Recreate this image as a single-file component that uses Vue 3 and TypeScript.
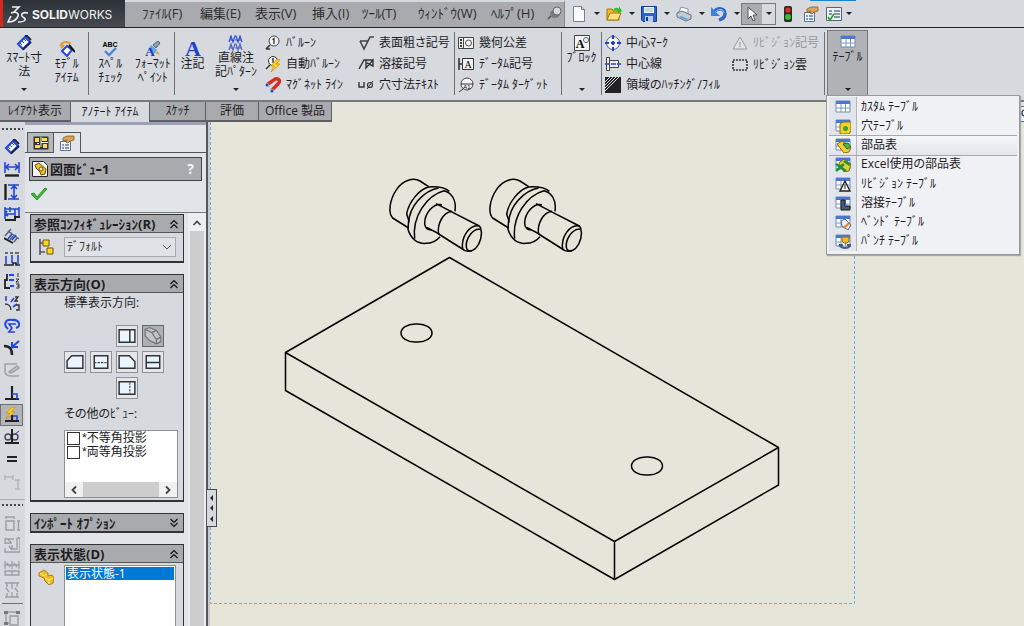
<script setup lang="ts">
import { ref } from 'vue'

interface Tool { icon: string; label: string; off?: boolean }

const menus: string[] = ['ﾌｧｲﾙ(F)', '編集(E)', '表示(V)', '挿入(I)', 'ﾂｰﾙ(T)', 'ｳｨﾝﾄﾞｳ(W)', 'ﾍﾙﾌﾟ(H)']
const quick: Tool[] = [
  { icon: 'new', label: '新規' },
  { icon: 'open', label: '開く' },
  { icon: 'save', label: '保存' },
  { icon: 'print', label: '印刷' },
  { icon: 'undo', label: '元に戻す' },
]
const balloons: Tool[] = [
  { icon: 'balloon', label: 'ﾊﾞﾙｰﾝ' },
  { icon: 'autoballoon', label: '自動ﾊﾞﾙｰﾝ' },
  { icon: 'magnet', label: 'ﾏｸﾞﾈｯﾄ ﾗｲﾝ' },
]
const symbols: Tool[] = [
  { icon: 'surface', label: '表面粗さ記号' },
  { icon: 'weld', label: '溶接記号' },
  { icon: 'holecall', label: '穴寸法ﾃｷｽﾄ' },
]
const datums: Tool[] = [
  { icon: 'gtol', label: '幾何公差' },
  { icon: 'datum', label: 'ﾃﾞｰﾀﾑ記号' },
  { icon: 'target', label: 'ﾃﾞｰﾀﾑ ﾀｰｹﾞｯﾄ' },
]
const centers: Tool[] = [
  { icon: 'cmark', label: '中心ﾏｰｸ' },
  { icon: 'cline', label: '中心線' },
  { icon: 'hatch', label: '領域のﾊｯﾁﾝｸﾞ/ﾌｨﾙ' },
]
const revisions: Tool[] = [
  { icon: 'revsym', label: 'ﾘﾋﾞｼﾞｮﾝ記号', off: true },
  { icon: 'cloud', label: 'ﾘﾋﾞｼﾞｮﾝ雲' },
]
const tableMenu: Tool[] = [
  { icon: 't-plain', label: 'ｶｽﾀﾑ ﾃｰﾌﾞﾙ' },
  { icon: 't-hole', label: '穴ﾃｰﾌﾞﾙ' },
  { icon: 't-bom', label: '部品表' },
  { icon: 't-excel', label: 'Excel使用の部品表' },
  { icon: 't-rev', label: 'ﾘﾋﾞｼﾞｮﾝ ﾃｰﾌﾞﾙ' },
  { icon: 't-weld', label: '溶接ﾃｰﾌﾞﾙ' },
  { icon: 't-bend', label: 'ﾍﾞﾝﾄﾞ ﾃｰﾌﾞﾙ' },
  { icon: 't-punch', label: 'ﾊﾟﾝﾁ ﾃｰﾌﾞﾙ' },
]
const tabs: string[] = ['ﾚｲｱｳﾄ表示', 'ｱﾉﾃｰﾄ ｱｲﾃﾑ', 'ｽｹｯﾁ', '評価', 'Office 製品']
const sideA: string[] = ['smart', 's-hdim', 's-vdim', 's-base', 's-ord', 's-hord', 's-vord', 's-chain', 's-path', 's-attach', 's-pencil', 's-perp', 's-auto', 's-view', 's-eq', 's-corner']
const sideB: string[] = ['s-g1', 's-g2', 's-g3', 's-g4']
const views: string[] = ['', '', 'v-top', 'v-iso', 'v-left', 'v-front', 'v-right', 'v-back', '', '', 'v-bottom', '']
const others = ref([
  { name: '*不等角投影', on: false },
  { name: '*両等角投影', on: false },
])
const hovered = ref<string>('t-bom')
const config = ref<string>('ﾃﾞﾌｫﾙﾄ')
</script>

<template>
  <svg class="sprite" aria-hidden="true">
    <symbol id="smart" viewBox="0 0 16 16"><path d="M2 9 9 2l5 5-7 7z" fill="#f4f8ff" stroke="#2344d8" stroke-width="2" /><path d="M7 14.500l8-7.500M9 1h2l4 4" fill="none" stroke="#1a2040" stroke-width="1.800" /><path d="M4 8l2 2M6 6l2 2M8 4l2 2" stroke="#2344d8" /></symbol>
    <symbol id="model" viewBox="0 0 16 16"><path d="M1 5C4 0 9 0 11 3M2 7l3-3" fill="none" stroke="#e79a2c" stroke-width="2" /><path d="M3 10l5-5 5 4-5 6z" fill="#fff" stroke="#2344d8" stroke-width="2" /><path d="M10 4l6 7" stroke="#111" stroke-width="2" /><circle cx="11" cy="2" r="1" fill="#e79a2c" /></symbol>
    <symbol id="spell" viewBox="0 0 16 16"><text x="8" y="6" text-anchor="middle" font-size="7" font-weight="700" font-family="Liberation Sans, sans-serif">ABC</text><path d="M3 10l4 4 7-7" fill="none" stroke="#4a86d8" stroke-width="2.4" /></symbol>
    <symbol id="format" viewBox="0 0 16 16"><path d="M8 4l5-4 2 2-4 5z" fill="#8aa" stroke="#557" /><path d="M6 4l6 5-3 4-6-4z" fill="#5da4e4" /><text x="5" y="15" text-anchor="middle" font-size="13" font-weight="700" fill="#1a35c8" font-family="Liberation Serif, serif">A</text><path d="M11 11l3 2" stroke="#e79a2c" stroke-width="2" /></symbol>
    <symbol id="note" viewBox="0 0 16 16"><text x="8" y="15" text-anchor="middle" font-size="22" font-weight="700" fill="#1f3fd0" font-family="Liberation Serif, serif">A</text></symbol>
    <symbol id="linear" viewBox="0 0 16 16"><g fill="none" stroke-width="1.2"><path d="M1 7l2-6 2 6 2-6h1l2 6 2-6 2 6M2 5h2M7 5h3M11 5h2" stroke="#2d49e0" /><path d="M1 15l2-6 2 6 2-6h1l2 6 2-6 2 6M2 13h2M7 13h3M11 13h2" stroke="#4d61c8" /></g></symbol>
    <symbol id="balloon" viewBox="0 0 16 16"><circle cx="9" cy="6" r="5" fill="#f7f7f7" stroke="#444" /><path d="M5 10l-4 4M1 14h4" stroke="#333" stroke-width="1.6" /><path d="M7.500 4.500L9 3.500V9" fill="none" stroke="#222" stroke-width="1.200" /></symbol>
    <symbol id="autoballoon" viewBox="0 0 16 16"><circle cx="8" cy="5" r="4.500" fill="#f7f7f7" stroke="#333" /><path d="M5 9l-4 4M7 3.500L8 3v4" stroke="#333" fill="none" stroke-width="1.400" /><path d="M12 3L6 10h3l-3 6 9-8h-4l4-4z" fill="#ffd21c" stroke="#c68a10" stroke-width=".7" /></symbol>
    <symbol id="magnet" viewBox="0 0 16 16"><path d="M3 7l7-5c4-1 6 2 3 5l-6 6" fill="none" stroke="#d92c20" stroke-width="3.400" /><path d="M1 6l4 4M5 12l4 2" stroke="#b8c0c8" stroke-width="2" /><circle cx="2" cy="8" r="1.500" fill="#2344d8" /><circle cx="7" cy="14" r="1.500" fill="#2344d8" /></symbol>
    <symbol id="surface" viewBox="0 0 16 16"><path d="M2 6h8M2 6l4 8 6-12h4" fill="none" stroke="#444" stroke-width="1.600" /></symbol>
    <symbol id="weld" viewBox="0 0 16 16"><path d="M1 13l5-9h9M8 4v8l7-8v6l-6-3" fill="none" stroke="#333" stroke-width="1.400" /></symbol>
    <symbol id="holecall" viewBox="0 0 16 16"><path d="M1 5v5h5V5" fill="none" stroke="#333" stroke-width="1.400" /><circle cx="12" cy="8" r="2.500" fill="none" stroke="#333" stroke-width="1.200" /><path d="M9 12l6-8" stroke="#333" /></symbol>
    <symbol id="gtol" viewBox="0 0 16 16"><path d="M.5 2.500h15v11H.5zM5.500 2.500v11" fill="#f3f3f3" stroke="#444" /><path d="M3 4v8" stroke="#333" stroke-width="2" stroke-dasharray="2 1" /><circle cx="10.500" cy="8" r="3" fill="none" stroke="#555" /></symbol>
    <symbol id="datum" viewBox="0 0 16 16"><path d="M4.500 2.500h11v11h-11z" fill="#f3f3f3" stroke="#333" /><path d="M1 2v12M1 8h3" stroke="#333" stroke-width="1.600" /><text x="10" y="12" text-anchor="middle" font-size="10" font-family="Liberation Serif, serif">A</text></symbol>
    <symbol id="target" viewBox="0 0 16 16"><circle cx="9" cy="7" r="6" fill="#f3f3f3" stroke="#444" /><path d="M3 7h12M5 12l-4 3" stroke="#333" /><text x="9" y="12" text-anchor="middle" font-size="6" font-family="Liberation Sans, sans-serif">A1</text></symbol>
    <symbol id="block" viewBox="0 0 16 16"><path d="M.5.5h15v15H.5z" fill="#f3f3f3" stroke="#444" /><text x="6" y="13" text-anchor="middle" font-size="12" font-weight="700" font-family="Liberation Serif, serif">A</text><circle cx="12" cy="5" r="2.500" fill="none" stroke="#666" /></symbol>
    <symbol id="cmark" viewBox="0 0 16 16"><circle cx="8" cy="8" r="6.500" fill="#f3f6fb" stroke="#55606e" /><path d="M8 0v4M8 6v4M8 12v4M0 8h4M6 8h4M12 8h4" stroke="#2140d8" stroke-width="2" /></symbol>
    <symbol id="cline" viewBox="0 0 16 16"><path d="M1.500 1.500h3v13h-3zM4.500 4.500h9v7h-9z" fill="#eee" stroke="#444" /><path d="M0 8h16" stroke="#2140d8" stroke-width="1.600" stroke-dasharray="5 1" /></symbol>
    <symbol id="hatch" viewBox="0 0 16 16"><path d="M0 0h16v16H0z" fill="#222" /><path d="M0 5l5-5M0 8l8-8M0 11L11 0M0 14L14 0" stroke="#ddd" /></symbol>
    <symbol id="revsym" viewBox="0 0 16 16"><path d="M8 2l7 12H1z" fill="#e2e3e5" stroke="#999" /><path d="M7 8l1-1v5" fill="none" stroke="#999" /></symbol>
    <symbol id="cloud" viewBox="0 0 16 16"><path d="M1 3h14v10H1z" fill="none" stroke="#333" stroke-width="1.600" stroke-dasharray="2 1" /></symbol>
    <symbol id="new" viewBox="0 0 16 16"><path d="M2.500.5h8l3 3v12h-11z" fill="#f8fbff" stroke="#6d8298" /><path d="M10.500.5v3h3" fill="#bfd0e0" stroke="#6d8298" /></symbol>
    <symbol id="open" viewBox="0 0 16 16"><path d="M1 3h5l1 2h6v9H1z" fill="#f3b928" stroke="#a87510" /><path d="M1 14l3-7h11l-3 7z" fill="#ffe27a" stroke="#a87510" /><path d="M7 5c1-4 4-4 6-2V0l3 5-4 3V5c-2-1-3-1-5 0z" fill="#2fbf2a" /></symbol>
    <symbol id="save" viewBox="0 0 16 16"><path d="M.5.5h15v15H2l-1.500-1.500z" fill="#2d63d0" stroke="#173a8c" /><path d="M3 1h10v6H3z" fill="#f3f8ff" /><path d="M4 10h8v6H4z" fill="#b8cdf0" /><path d="M5 11h2v4H5z" fill="#173a8c" /><path d="M4 3h8M4 5h8" stroke="#9bb" /></symbol>
    <symbol id="print" viewBox="0 0 16 16"><path d="M3 6l2-5 7 2 0 5z" fill="#fff" stroke="#8793a0" /><path d="M1 7l5-2 9 4v4l-5 2-9-4z" fill="#c3cad3" stroke="#66717e" /><path d="M3 11l7 3 2-1-7-3z" fill="#5aa0e8" /></symbol>
    <symbol id="undo" viewBox="0 0 16 16"><path d="M3 6c4-5 11-4 11 2 0 4-3 5-6 6" fill="none" stroke="#2b66c8" stroke-width="3.400" /><path d="M0 1v9h9z" fill="#3b82dc" /><path d="M4 6c4-4 9-3 9 1" fill="none" stroke="#8fc3f4" /></symbol>
    <symbol id="cursor" viewBox="0 0 16 16"><path d="M4 1v12l3-3 2 5 2-1-2-5h4z" fill="#fff" stroke="#555" /></symbol>
    <symbol id="traffic" viewBox="0 0 16 16"><rect x="4" y="0" width="8" height="16" rx="2" fill="#2b2b2b" /><circle cx="8" cy="4" r="2.600" fill="#e03020" /><circle cx="8" cy="11" r="3" fill="#34c030" /></symbol>
    <symbol id="props" viewBox="0 0 16 16"><path d="M1.500 6.500h10v9h-10z" fill="#f4f6f8" stroke="#68707c" /><path d="M3 10h2M6 10h4M3 13h2M6 13h4" stroke="#4c7cc0" stroke-width="1.400" /><path d="M4 3l4-2h7v4l-4 1-2 2-2-1 1-2-4 1z" fill="#d7a45c" stroke="#8a5a20" stroke-width=".8" /></symbol>
    <symbol id="options" viewBox="0 0 16 16"><path d="M.5 1.500h15v13H.5z" fill="#e9f1f8" stroke="#567" /><path d="M3 5h3M3 8h3M8 5h6M8 8h6M8 11h6" stroke="#678" stroke-width="1.300" /><path d="M2 11l2 3 4-6" fill="none" stroke="#24a024" stroke-width="1.600" /></symbol>
    <symbol id="pin" viewBox="0 0 16 16"><path d="M5 10l-4 4" stroke="#555" stroke-width="1.600" /><ellipse cx="8" cy="9" rx="5" ry="4" fill="#77797e" /><circle cx="10" cy="6" r="4" fill="#d5d8dc" stroke="#666" /></symbol>
    <symbol id="zoomfit" viewBox="0 0 16 16"><path d="M.5.5h15v15H.5z" fill="#e8f0fa" stroke="#4a6ea8" /><circle cx="5" cy="7" r="3" fill="#fff" stroke="#345" stroke-width="1.400" /></symbol>
    <symbol id="t-plain" viewBox="0 0 16 16"><path d="M1 2h14v11H1z" fill="#fff" stroke="#6f8cb8" /><path d="M1 2h14v3H1z" fill="#4a78d0" /><path d="M1 9h14M6 5v8M10.500 5v8" stroke="#7f98bc" /></symbol>
    <symbol id="t-hole" viewBox="0 0 16 16"><use href="#t-plain" /><path d="M5 6l3-2h8v9l-2 3H5z" fill="#f1d326" stroke="#8a7010" /><circle cx="10.500" cy="10.500" r="2.500" fill="#3da52d" /></symbol>
    <symbol id="t-bom" viewBox="0 0 16 16"><use href="#t-plain" /><path d="M2 7l5-3 9 6-2 5-5 1z" fill="#f4cd30" stroke="#946b10" /><path d="M8 7l5-1 3 4-4 2z" fill="#54b83e" stroke="#246b1c" /></symbol>
    <symbol id="t-excel" viewBox="0 0 16 16"><use href="#t-plain" /><path d="M4 7l5-4 7 5-2 7-5 1z" fill="#e6d03a" stroke="#7d6c10" /><path d="M1 8l10 7M1 15l8-7M9 5l6 4" stroke="#219236" stroke-width="2.600" /></symbol>
    <symbol id="t-rev" viewBox="0 0 16 16"><use href="#t-plain" /><path d="M10 5l5 10H5z" fill="#f4f4f4" stroke="#222" stroke-width="1.400" /><path d="M10 8v5" stroke="#222" /></symbol>
    <symbol id="t-weld" viewBox="0 0 16 16"><use href="#t-plain" /><path d="M6 5h4v6h5v4H6z" fill="#4c5868" stroke="#151b24" /><path d="M10 8l3 3h-3z" fill="#3f73d0" /></symbol>
    <symbol id="t-bend" viewBox="0 0 16 16"><use href="#t-plain" /><path d="M6 7l4-2 6 6-3 5-6-4z" fill="#eceff2" stroke="#596373" /><path d="M9 14l5-5" stroke="#e57a25" stroke-width="2" /></symbol>
    <symbol id="t-punch" viewBox="0 0 16 16"><use href="#t-plain" /><path d="M7 4h7v4l-2 2h-3L7 8z" fill="#f0b832" stroke="#98660e" /><path d="M4 12c3 4 9 4 12 0M4 12h4M12 12h4" fill="none" stroke="#435a80" stroke-width="1.800" /></symbol>
    <symbol id="s-hdim" viewBox="0 0 16 16"><path d="M1 1v11M15 1v11M2 6h12M5 3L2 6l3 3M11 3l3 3-3 3" fill="none" stroke="#2446dc" stroke-width="1.600" /><path d="M1 14.500h14" stroke="#222" stroke-width="2.400" /></symbol>
    <symbol id="s-vdim" viewBox="0 0 16 16"><path d="M4 1h11M4 15h11M10 2v12M7 5l3-3 3 3M7 11l3 3 3-3" fill="none" stroke="#2446dc" stroke-width="1.600" /><path d="M1.500 0v16" stroke="#222" stroke-width="2.400" /></symbol>
    <symbol id="s-base" viewBox="0 0 16 16"><path d="M1 1v12M15 1v9M1 3h14M1 8h10M6 1v5M11 3v8M3 5l-2 3 3 2" fill="none" stroke="#2446dc" stroke-width="1.600" /><path d="M1 14h10v-3h5" fill="none" stroke="#222" stroke-width="2" /></symbol>
    <symbol id="s-ord" viewBox="0 0 16 16"><path d="M1 8l6-7M4 3l11 8M6 12l3-4M10 14l3-4" fill="none" stroke="#555f78" stroke-width="1.400" /><path d="M4 11l4-5M8 12l4-5" stroke="#2446dc" stroke-width="1.600" /><path d="M0 10l9 5" stroke="#222" stroke-width="2" /></symbol>
    <symbol id="s-hord" viewBox="0 0 16 16"><path d="M1 2h3M6 2h3M11 2h4" stroke="#444" stroke-width="1.500" /><path d="M2 5v8M8 4v8M14 4v9" stroke="#2446dc" stroke-width="1.600" /><path d="M0 14h9v-2h3v2h4" fill="none" stroke="#222" stroke-width="1.600" /></symbol>
    <symbol id="s-vord" viewBox="0 0 16 16"><path d="M3 1v6H1v8h5" fill="none" stroke="#222" stroke-width="1.800" /><path d="M5 2h5M5 7h5M6 13h4" stroke="#2446dc" stroke-width="1.800" /><path d="M14 0v4M12 6h3l-3 3h3M12 11h3v4h-3M13 13h2" fill="none" stroke="#333" /></symbol>
    <symbol id="s-chain" viewBox="0 0 16 16"><path d="M2 1v5M7 7l3-4M9 12l4-3" stroke="#2446dc" stroke-width="1.600" /><path d="M1 9c3 0 6 2 6 6M11 2h3l-3 4h3M12 10h3v5h-3" fill="none" stroke="#333" stroke-width="1.400" /></symbol>
    <symbol id="s-path" viewBox="0 0 16 16"><path d="M4 11C-1 7 1 1 8 2c7-1 10 6 4 8" fill="none" stroke="#2446dc" stroke-width="2" /><path d="M12 6H5l3 4-3 4h6" fill="none" stroke="#2446dc" stroke-width="1.700" /></symbol>
    <symbol id="s-attach" viewBox="0 0 16 16"><path d="M0 6c6 0 8 3 8 9M7 7h3" fill="none" stroke="#222" stroke-width="2.600" /><path d="M15 1L8 7M8 2v5h6" fill="none" stroke="#2446dc" stroke-width="2" /></symbol>
    <symbol id="s-pencil" viewBox="0 0 16 16"><path d="M13 2H1v7c0 4 3 5 6 5h8M5 10l8-6 2 2-8 5z" fill="none" stroke="#a0a3a8" stroke-width="1.600" /></symbol>
    <symbol id="s-perp" viewBox="0 0 16 16"><path d="M8 1v12M1 14h14" stroke="#222" stroke-width="2.200" /><path d="M8 9h5v5" fill="none" stroke="#2446dc" stroke-width="1.600" /></symbol>
    <symbol id="s-auto" viewBox="0 0 16 16"><path d="M1 14h14M8 8v6" stroke="#222" stroke-width="2.200" /><path d="M9 9h4v4" fill="none" stroke="#2446dc" stroke-width="1.600" /><path d="M8 0L2 6h4l-4 6 9-7H7l4-5z" fill="#ffd21c" stroke="#c68a10" stroke-width=".7" /></symbol>
    <symbol id="s-view" viewBox="0 0 16 16"><circle cx="4" cy="8" r="3" fill="none" stroke="#446" stroke-width="1.400" /><circle cx="11" cy="8" r="3" fill="none" stroke="#446" stroke-width="1.400" /><path d="M8 0v14M1 14h14" stroke="#222" stroke-width="2" /><path d="M11 5l4-3" stroke="#446" /></symbol>
    <symbol id="s-eq" viewBox="0 0 16 16"><path d="M3 5h10M3 9h10" stroke="#222" stroke-width="2" /></symbol>
    <symbol id="s-corner" viewBox="0 0 16 16"><path d="M1 1v5M9 1v5M1 3h8M11 6h5M11 15h5M14 6v9" stroke="#b2b5ba" stroke-width="1.400" /></symbol>
    <symbol id="s-g1" viewBox="0 0 16 16"><path d="M2 6h8v9H2zM2 1v3M10 1v3M2 2h8M13 6h3M13 15h3M14.500 6v9" fill="none" stroke="#9a9da3" stroke-width="1.400" /></symbol>
    <symbol id="s-g2" viewBox="0 0 16 16"><path d="M1 2h9M1 6h7M1 1v6M13 1h3v14H1v-4M13 1v11H8V8M5 9l3 4M4 3l3 2" fill="none" stroke="#9a9da3" stroke-width="1.300" /></symbol>
    <symbol id="s-g3" viewBox="0 0 16 16"><path d="M1 1v8M8 1v8M15 1v8M1 5h14M1 11h14v4H1zM8 11v4M3 3l3 4M10 3l3 4" fill="none" stroke="#9a9da3" stroke-width="1.300" /></symbol>
    <symbol id="s-g4" viewBox="0 0 16 16"><path d="M1 1h14M1 15h14M3 1v4M8 1v6M13 1v4M3 11v4M8 10v5M13 11v4M2 6l3 4M11 6l3 4" fill="none" stroke="#9a9da3" stroke-width="1.300" /></symbol>
    <symbol id="s-group" viewBox="0 0 16 16"><path d="M2 2h12M2 2v11h4M6 6h8v9H6z" fill="none" stroke="#9a9da3" stroke-width="1.400" /><path d="M0 1h4v3H0zM12 1h4v3h-4zM0 12h4v3H0z" fill="#777" /></symbol>
    <symbol id="tree" viewBox="0 0 16 16"><path d="M.5 1.500h15v13H.5z" fill="#333" /><path d="M2 3h4v4H2zM9 3h5v3H9zM2 10h5v3H2zM10 9h4v4h-4z" fill="#ffd94c" /><path d="M8 7.500h7M4 8.500h2M8 2v10" stroke="#fff" /></symbol>
    <symbol id="drawview" viewBox="0 0 16 16"><path d="M.5.5h11l4 4v11H.5z" fill="#f4f8fb" stroke="#223" /><path d="M3 4l4-2 7 6-1 5-4 1-1-3-4-4z" fill="#f0c02c" stroke="#725008" /><circle cx="9" cy="8" r="2" fill="#fff2b0" stroke="#725008" /></symbol>
    <symbol id="config" viewBox="0 0 16 16"><path d="M2 0v16M2 4h4M2 13h5" stroke="#556" stroke-width="1.600" /><path d="M5 1h6v6H5zM9 9h6v6H9z" fill="#ffd42a" stroke="#6e5508" /></symbol>
    <symbol id="part" viewBox="0 0 16 16"><path d="M1 4l5-3 4 3v3l4-1 2 3-1 5-4 2-4-4-1-3-5-2z" fill="#f2bd22" stroke="#b07d0c" /><path d="M2 4l4 3 3-2M7 9l4 2 4-2M11 11v4" fill="none" stroke="#fff0a0" /></symbol>
    <symbol id="check" viewBox="0 0 16 16"><path d="M0 8l3-1 3 4 8-9 2 1L6 14z" fill="#35c52c" stroke="#1c7d18" stroke-width=".8" /></symbol>
    <symbol id="v-top" viewBox="0 0 16 16"><path d="M1 2.500h14v11H1zM10.500 2.500v11" fill="#eaf4ff" stroke="#333" stroke-width="1.300" /></symbol>
    <symbol id="v-iso" viewBox="0 0 16 16"><path d="M1 2l4-1.500 6 2.500 4 6v4l-4 2-6-3-4-4zM1 2l6 3 4 6v4M7 5l4-2M11 11l4-2" fill="#c2c4c7" stroke="#707276" /></symbol>
    <symbol id="v-left" viewBox="0 0 16 16"><path d="M1 13.500V7l4-4.500h10v11z" fill="#eaf4ff" stroke="#333" stroke-width="1.300" /></symbol>
    <symbol id="v-front" viewBox="0 0 16 16"><path d="M2 2.500h12v11H2z" fill="#eaf4ff" stroke="#333" stroke-width="1.300" /><path d="M2 8.500h12" stroke="#444" stroke-dasharray="2 1" /></symbol>
    <symbol id="v-right" viewBox="0 0 16 16"><path d="M1 2.500h9l5 5v6H1z" fill="#eaf4ff" stroke="#333" stroke-width="1.300" /></symbol>
    <symbol id="v-back" viewBox="0 0 16 16"><path d="M2 2.500h12v11H2zM2 8.500h12" fill="#eaf4ff" stroke="#333" stroke-width="1.300" /></symbol>
    <symbol id="v-bottom" viewBox="0 0 16 16"><path d="M1 2.500h14v11H1z" fill="#eaf4ff" stroke="#333" stroke-width="1.300" /><path d="M10.500 3v10" stroke="#444" stroke-dasharray="2 1" /></symbol>
    <symbol id="fold" viewBox="0 0 10 10"><path d="M1.500 5L5 1.500 8.500 5M1.500 9L5 5.500 8.500 9" fill="none" stroke="#111" stroke-width="1.200" /></symbol>
    <symbol id="unfold" viewBox="0 0 10 10"><path d="M1.500 1L5 4.500 8.500 1M1.500 5L5 8.500 8.500 5" fill="none" stroke="#111" stroke-width="1.200" /></symbol>
    <symbol id="chev-up" viewBox="0 0 10 10"><path d="M1.500 7L5 3.500 8.500 7" fill="none" stroke="#444" stroke-width="1.600" /></symbol>
    <symbol id="chev-down" viewBox="0 0 10 10"><path d="M1 3l4 4 4-4" fill="none" stroke="#555" /></symbol>
    <symbol id="chev-left" viewBox="0 0 10 10"><path d="M7 1.500L3.500 5 7 8.500" fill="none" stroke="#444" stroke-width="1.800" /></symbol>
    <symbol id="chev-right" viewBox="0 0 10 10"><path d="M3 1.500L6.500 5 3 8.500" fill="none" stroke="#444" stroke-width="1.800" /></symbol>
  </svg>

  <div class="app">
    <header class="title">
      <div class="brand">
        <svg class="ds" viewBox="0 0 22 20"><g fill="none" stroke="#f2f2f2" stroke-width="1.600"><path d="M5 2h7L7 7" /><path d="M4 8c6-2 9 1 6 5-2 3-5 4-9 4l3-6M21 8c-4-1-7 0-6 3 1 2 4 2 3 4-1 2-4 2-7 2" /></g></svg>
        <span><b>SOLID</b>WORKS</span>
      </div>
      <nav class="menubar">
        <button v-for="m in menus" :key="m" type="button">{{ m }}</button>
        <svg class="i"><use href="#pin" /></svg>
      </nav>
      <div class="quick">
        <template v-for="q in quick" :key="q.icon">
          <button type="button" class="qi" :aria-label="q.label"><svg class="i"><use :href="'#' + q.icon" /></svg></button>
          <button type="button" class="qd" :aria-label="q.label + ' メニュー'"><i class="caret"></i></button>
        </template>
        <div class="select-tool">
          <button type="button" class="on" aria-label="選択"><svg class="i"><use href="#cursor" /></svg></button>
          <button type="button" aria-label="選択 メニュー"><i class="caret"></i></button>
        </div>
        <button type="button" class="q2" aria-label="再構築"><svg class="i"><use href="#traffic" /></svg></button>
        <button type="button" class="q2" aria-label="プロパティ"><svg class="i"><use href="#props" /></svg></button>
        <button type="button" class="q2" aria-label="オプション"><svg class="i"><use href="#options" /></svg></button>
        <button type="button" class="qd last" aria-label="オプション メニュー"><i class="caret"></i></button>
      </div>
    </header>

    <section class="ribbon">
      <div class="group g1">
        <button type="button" class="big drop"><svg class="i"><use href="#smart" /></svg><span>ｽﾏｰﾄ寸<br>法</span><i class="caret"></i></button>
        <button type="button" class="big"><svg class="i"><use href="#model" /></svg><span>ﾓﾃﾞﾙ<br>ｱｲﾃﾑ</span></button>
      </div>
      <div class="group g2">
        <button type="button" class="big"><svg class="i"><use href="#spell" /></svg><span>ｽﾍﾟﾙ<br>ﾁｪｯｸ</span></button>
        <button type="button" class="big"><svg class="i"><use href="#format" /></svg><span>ﾌｫｰﾏｯﾄ<br>ﾍﾟｲﾝﾄ</span></button>
      </div>
      <div class="group g3">
        <button type="button" class="big"><svg class="i"><use href="#note" /></svg><span>注記</span></button>
        <button type="button" class="big drop"><svg class="i"><use href="#linear" /></svg><span>直線注<br>記ﾊﾟﾀｰﾝ</span><i class="caret"></i></button>
      </div>
      <div class="group g4">
        <div class="col"><button v-for="t in balloons" :key="t.icon" type="button"><svg class="i"><use :href="'#' + t.icon" /></svg>{{ t.label }}</button></div>
        <div class="col"><button v-for="t in symbols" :key="t.icon" type="button"><svg class="i"><use :href="'#' + t.icon" /></svg>{{ t.label }}</button></div>
      </div>
      <div class="group g5">
        <div class="col"><button v-for="t in datums" :key="t.icon" type="button"><svg class="i"><use :href="'#' + t.icon" /></svg>{{ t.label }}</button></div>
      </div>
      <div class="group g6">
        <button type="button" class="big drop"><svg class="i"><use href="#block" /></svg><span>ﾌﾞﾛｯｸ</span><i class="caret"></i></button>
      </div>
      <div class="group g7">
        <div class="col"><button v-for="t in centers" :key="t.icon" type="button"><svg class="i"><use :href="'#' + t.icon" /></svg>{{ t.label }}</button></div>
        <div class="col"><button v-for="t in revisions" :key="t.icon" type="button" :disabled="t.off"><svg class="i"><use :href="'#' + t.icon" /></svg>{{ t.label }}</button></div>
      </div>
      <div class="table-tool">
        <button type="button" class="big drop pressed" aria-haspopup="menu" aria-expanded="true"><svg class="i"><use href="#t-plain" /></svg><span>ﾃｰﾌﾞﾙ</span><i class="caret"></i></button>
        <div class="menu" role="menu">
          <button v-for="t in tableMenu" :key="t.icon" type="button" role="menuitem" :class="{ hot: hovered === t.icon }" @mouseenter="hovered = t.icon">
            <span class="gut"><svg class="i"><use :href="'#' + t.icon" /></svg></span><span class="txt">{{ t.label }}</span>
          </button>
        </div>
      </div>
    </section>

    <nav class="tabs">
      <button v-for="(t, n) in tabs" :key="t" type="button" :class="{ active: n === 1 }">{{ t }}</button>
      <svg class="i edge"><use href="#zoomfit" /></svg>
    </nav>

    <main class="work">
      <aside class="tools">
        <div class="grip"></div>
        <div class="stack">
          <button v-for="s in sideA" :key="s" type="button" :class="{ on: s === 's-auto' }" :aria-label="s"><svg class="i"><use :href="'#' + s" /></svg></button>
        </div>
        <hr>
        <div class="grip"></div>
        <div class="stack short">
          <button v-for="s in sideB" :key="s" type="button" :aria-label="s"><svg class="i"><use :href="'#' + s" /></svg></button>
        </div>
        <hr class="dark">
        <button type="button" aria-label="グループ"><svg class="i"><use href="#s-group" /></svg></button>
      </aside>

      <aside class="panel">
        <div class="ptabs">
          <button type="button" aria-label="ツリー"><svg class="i"><use href="#tree" /></svg></button>
          <button type="button" class="active" aria-label="プロパティ"><svg class="i"><use href="#props" /></svg></button>
        </div>
        <div class="ptitle"><svg class="i"><use href="#drawview" /></svg><h1>図面ﾋﾞｭｰ1</h1><button type="button">?</button></div>
        <button type="button" class="ok" aria-label="OK"><svg class="i"><use href="#check" /></svg></button>
        <div class="scroll">
          <div class="sections">
            <section class="box">
              <h2>参照ｺﾝﾌｨｷﾞｭﾚｰｼｮﾝ(R)<svg><use href="#fold" /></svg></h2>
              <div class="row">
                <svg class="i"><use href="#config" /></svg>
                <div class="pick">
                  <select v-model="config" aria-label="参照コンフィギュレーション"><option>ﾃﾞﾌｫﾙﾄ</option></select>
                  <svg><use href="#chev-down" /></svg>
                </div>
              </div>
            </section>
            <section class="box">
              <h2>表示方向(O)<svg><use href="#fold" /></svg></h2>
              <div class="orient">
                <p>標準表示方向:</p>
                <div class="views">
                  <template v-for="(v, n) in views" :key="n">
                    <button v-if="v" type="button" :class="{ on: v === 'v-iso' }" :aria-label="v"><svg><use :href="'#' + v" /></svg></button>
                    <span v-else></span>
                  </template>
                </div>
                <p>その他のﾋﾞｭｰ:</p>
                <div class="list">
                  <label v-for="o in others" :key="o.name"><input v-model="o.on" type="checkbox">{{ o.name }}</label>
                  <div class="hscroll"><svg><use href="#chev-left" /></svg><i></i><svg><use href="#chev-right" /></svg></div>
                </div>
              </div>
            </section>
            <section class="box">
              <h2 class="closed">ｲﾝﾎﾟｰﾄ ｵﾌﾟｼｮﾝ<svg><use href="#unfold" /></svg></h2>
            </section>
            <section class="box">
              <h2>表示状態(D)<svg><use href="#fold" /></svg></h2>
              <div class="row top">
                <svg class="i"><use href="#part" /></svg>
                <ul><li>表示状態-1</li></ul>
              </div>
            </section>
          </div>
          <div class="vscroll"><svg><use href="#chev-up" /></svg><i></i></div>
        </div>
      </aside>

      <div class="split"><button type="button" aria-label="パネルを閉じる"><i></i><i></i><i></i></button></div>

      <div class="canvas">
        <svg width="814" height="504" viewBox="210 122 814 504">
          <path d="M210.500 122V603.500H854.500V122" fill="none" stroke="#62aef0" stroke-dasharray="3 2" />
          <g fill="none" stroke="#000" stroke-width="1.500" stroke-linejoin="round">
            <path d="M449.500 257.500L285.500 352.500 614.500 541.500 778.500 447.500ZM285.500 352.500V390.500L614.500 579.500 778.500 485V447.500M614.500 541.500V579.500" />
            <rect x="401" y="324" width="31" height="18" rx="14" ry="9" />
            <rect x="631.500" y="457" width="31" height="18" rx="14" ry="9" />
          </g>
          <g v-for="x in [380, 480]" :key="x" :transform="`translate(${x} 170) scale(.3333)`" fill="none" stroke="#000" stroke-width="4.500" stroke-linejoin="round">
            <path d="M146 50L120 33C100 22 70 30 50 58C28 90 24 130 38 144L86 174" />
            <path d="M208 64C195 52 178 49 146 51C118 58 86 96 80 132L86 150L84 178C92 206 112 222 138 220C156 220 170 212 180 200" />
            <path d="M176 54C130 62 88 110 86 158M104 206C96 140 140 76 192 62C215 68 230 90 225 124" />
            <path d="M186 104C160 98 134 130 134 160C134 172 142 180 156 181M168 101L214 125M140 172L178 192" />
            <path d="M216 124C190 128 170 160 176 194M212 124L298 168M176 192L252 240" />
            <path d="M298 168C270 162 242 200 248 238C256 246 275 246 287 235C302 220 308 192 302 174Z" />
            <path d="M300 178C280 174 256 205 259 232C261 242 268 244 276 242" />
          </g>
        </svg>
      </div>
    </main>
  </div>
</template>

<style>
body { margin: 0; overflow: hidden; }
</style>

<style scoped>
.sprite { display: none; }
.app { height: 100vh; display: flex; flex-direction: column; overflow: hidden; background: #e5e5da; color: #1c1c1e; font: 12px/14px "Open Sans", "Noto Sans CJK JP", sans-serif; font-feature-settings: "palt"; }
button { font: inherit; color: inherit; background: none; border: 0; padding: 0; margin: 0; font-feature-settings: inherit; }
* { box-sizing: border-box; }
.i { width: 16px; height: 16px; flex: none; display: block; }
.caret { display: block; border: 3px solid transparent; border-top-color: #222; border-bottom: 0; }

.title { display: flex; height: 28px; flex: none; background: #d6d9de; border-bottom: 1px solid #222; }
.brand { width: 125px; display: flex; align-items: center; gap: 3px; padding: 3px 0 0 4px; border-left: 3px solid #d8281e; background: linear-gradient(#2c3137, #454b51); color: #f2f2f2; font: 12px/20px Inter, sans-serif; }
.brand .ds { width: 22px; height: 20px; }
.menubar { width: 440px; display: grid; grid-template-columns: 58px 55px 57px 50px 56px 73px 56px 16px; align-items: center; padding: 0 0 3px 17px; background: #a9aaad; border-top: 2px solid #d6d9de; border-right: 1px solid #888; font-size: 13px; color: #2c2c2e; }
.menubar button { text-align: left; white-space: nowrap; }
.quick { flex: 1; display: flex; align-items: center; padding-left: 5px; background: linear-gradient(#1883d7, #1883d7) 245px 0 / 46px 1px no-repeat; }
.quick button { display: grid; place-items: center; height: 22px; }
.qi { width: 18px; }
.qd { width: 17px; }
.select-tool { display: flex; margin-left: -4px; border: 1px solid #77797d; }
.select-tool button { width: 13px; height: 20px; }
.select-tool .on { width: 20px; background: #a9abae; }
.q2 { width: 23px; }
.quick .last { width: 8px; }

.ribbon { display: flex; height: 74px; flex: none; padding: 2px 0 3px; background: #d6d9de; border-bottom: 2px solid #77797c; }
.group { display: flex; flex: none; border-right: 1px solid #6e7074; margin: 2px 0; }
.big { flex: 1; display: flex; flex-direction: column; align-items: center; padding-top: 9px; font-family: "Liberation Sans", "Noto Sans CJK JP", sans-serif; line-height: 14px; text-align: center; white-space: nowrap; }
.big.drop { padding-top: 3px; }
.big .caret { margin-top: auto; margin-bottom: 4px; }
.g1 { width: 89px; padding-left: 3px; }
.g2 { width: 86px; }
.g3 { width: 87px; border-right: 0; }
.g3 .drop { flex: 0 0 52px; }
.g4 { width: 193px; }
.g4 .col:first-child { width: 93px; }
.g5 { width: 107px; }
.g6 { width: 40px; }
.g7 { width: 223px; }
.g7 .col:first-child { width: 127px; }
.col { display: flex; flex-direction: column; padding-left: 3px; }
.col button { height: 22px; display: flex; align-items: center; gap: 5px; white-space: nowrap; }
.col button:disabled { color: #96989c; }
.table-tool { position: relative; display: flex; width: 43px; padding-left: 2px; }
.pressed { background: #b0b2b6; border: 1px solid #77797d; border-bottom: 0; padding-top: 4px; }
.pressed .caret { margin-bottom: 6px; }
.menu { position: absolute; z-index: 2; top: 65px; left: 1px; width: 194px; height: 160px; display: flex; flex-direction: column; padding: 1px 2px 3px; background: #f0f1f5; border: 1px solid #98999e; box-shadow: 1px 1px 1px #a8a8a8; }
.menu button { flex: 1; display: flex; text-align: left; }
.gut { width: 28px; display: grid; place-items: center; background: #e2e5ea; border-right: 1px solid #b3b7be; }
.txt { align-self: center; padding-left: 4px; }
.menu .hot { background: linear-gradient(#f5f6f8, #e2e4ea); box-shadow: 0 -1px #a2a8b2, 0 1px #a2a8b2; z-index: 1; }
.hot .gut { background: none; }

.tabs { display: flex; height: 20px; flex: none; overflow: hidden; }
.tabs button { width: 53px; background: #a9aaad; border: solid #5e6064; border-width: 0 1px 2px 0; white-space: nowrap; line-height: 18px; }
.tabs button:nth-child(1) { width: 71px; }
.tabs button:nth-child(2) { width: 79px; }
.tabs button:nth-child(3) { width: 56px; }
.tabs button:nth-child(5) { width: 73px; }
.tabs .active { background: #d6d9de; border-bottom: 0; }
.edge { margin: 4px -12px 0 auto; }

.work { flex: 1; min-height: 0; display: flex; }
.tools { width: 25px; flex: none; background: #d6d9de; padding-top: 6px; overflow: hidden; }
.tools button { width: 23px; height: 22px; display: grid; place-items: center; }
.grip { height: 2px; margin: 0 2px 6px; background: repeating-linear-gradient(90deg, #444 0 2px, transparent 2px 4px); }
.stack { height: 357px; display: flex; flex-direction: column; justify-content: space-between; }
.stack.short { height: 89px; }
.tools .on { background: #b3b5b9; border: 1px solid #6d6f73; }
.tools hr { margin: 6px 0 4px; border: 0; border-top: 1px solid #aeb0b5; }
.tools hr.dark { margin: 2px 2px 3px; border-color: #6e7074; }

.panel { width: 181px; flex: none; display: flex; flex-direction: column; background: #e1e4e9; border-top: 3px solid #9da0b5; }
.ptabs { display: flex; flex: none; height: 28px; padding: 7px 0 0 2px; border-bottom: 1px solid #555; }
.ptabs button { width: 27px; height: 20px; display: grid; place-items: center; background: #b6b8bc; border: 1px solid #555; border-bottom: 0; }
.ptabs .active { background: #e1e4e9; height: 21px; border-left: 0; }
.ptitle { flex: none; display: flex; align-items: center; gap: 2px; height: 24px; margin: 4px 4px 0; padding: 0 7px 0 2px; background: #a9aaad; border: 1px solid #444; }
h1, h2 { margin: 0; font-size: 13px; font-weight: 700; line-height: 16px; color: #1d1d1f; }
h1 { flex: 1; }
.ptitle button { color: #f4f4f4; font-size: 14px; font-weight: 700; }
.ok { flex: none; width: 17px; margin: 5px 0 10px 6px; }
.scroll { flex: 1; min-height: 0; display: flex; border-top: 1px solid #777; }
.sections { flex: 1; padding: 1px 4px 0 5px; overflow: hidden; }
.box { margin-bottom: 11px; border: 1px solid #333; border-bottom-width: 2px; background: #d6d9de; }
h2 { display: flex; justify-content: space-between; align-items: center; height: 18px; padding: 0 4px 0 3px; background: #a9aaad; border-bottom: 1px solid #555; white-space: nowrap; }
h2.closed { height: 17px; border: 0; }
h2 svg { width: 10px; height: 10px; flex: none; }
.row { display: flex; gap: 10px; align-items: center; padding: 4px 7px; }
.row.top { align-items: flex-start; padding-top: 2px; }
.row.top .i { margin-top: 4px; }
.pick { flex: 1; display: grid; align-items: center; }
.pick > * { grid-area: 1 / 1; }
.pick select { appearance: none; height: 20px; padding: 0 2px; font: inherit; color: #333; background: #dfe2e6; border: 1px solid #a7a9ad; border-radius: 0; }
.pick svg { width: 10px; height: 10px; justify-self: end; margin-right: 4px; pointer-events: none; }
.orient { padding: 3px 5px 2px 33px; }
p { margin: 0; }
.views { display: grid; grid-template-columns: repeat(4, 22px); grid-auto-rows: 22px; gap: 4px; padding: 15px 0 8px; }
.views button { display: grid; place-items: center; background: #e4e6ea; border: 1px solid #8d9096; }
.views .on { background: #aeb0b3; border-color: #666; }
.views svg { width: 18px; height: 18px; }
.list { height: 68px; margin-top: 9px; display: flex; flex-direction: column; background: #fff; border: 1px solid #8d9096; }
.list label { display: flex; align-items: center; gap: 2px; height: 14px; padding-left: 2px; white-space: nowrap; font-family: "Liberation Sans", "Noto Sans CJK JP", sans-serif; }
.list input { appearance: none; width: 13px; height: 13px; margin: 0; background: #fff; border: 1px solid #333; }
.hscroll { display: flex; align-items: center; gap: 4px; height: 15px; margin-top: auto; padding: 0 4px; background: #f0f0f0; }
.hscroll i { flex: 1; height: 15px; background: #cdcdcd; }
.hscroll svg, .vscroll svg { width: 10px; height: 10px; }
ul { flex: 1; height: 120px; margin: 0; padding: 1px; list-style: none; background: #fff; border: 1px solid #8d9096; }
li { background: #0078d7; color: #fff; line-height: 13px; padding-left: 1px; }
.vscroll { width: 18px; display: flex; flex-direction: column; align-items: center; padding-top: 5px; background: #eceef0; }
.vscroll i { flex: 1; width: 14px; margin-top: 3px; background: #cdcdcd; }

.split { width: 4px; flex: none; position: relative; background: #c9cbd0; border-left: 2px solid #55575c; }
.split button { position: absolute; top: 367px; left: -1px; width: 10px; height: 38px; display: flex; flex-direction: column; justify-content: space-evenly; align-items: center; background: #d6d9de; border: 1px solid #44464a; border-left: 0; }
.split i { border: 3px solid transparent; border-right-color: #222; border-left: 0; }
.canvas { flex: 1; min-width: 0; overflow: hidden; background: #e5e5da; }
.canvas svg { display: block; }
</style>
